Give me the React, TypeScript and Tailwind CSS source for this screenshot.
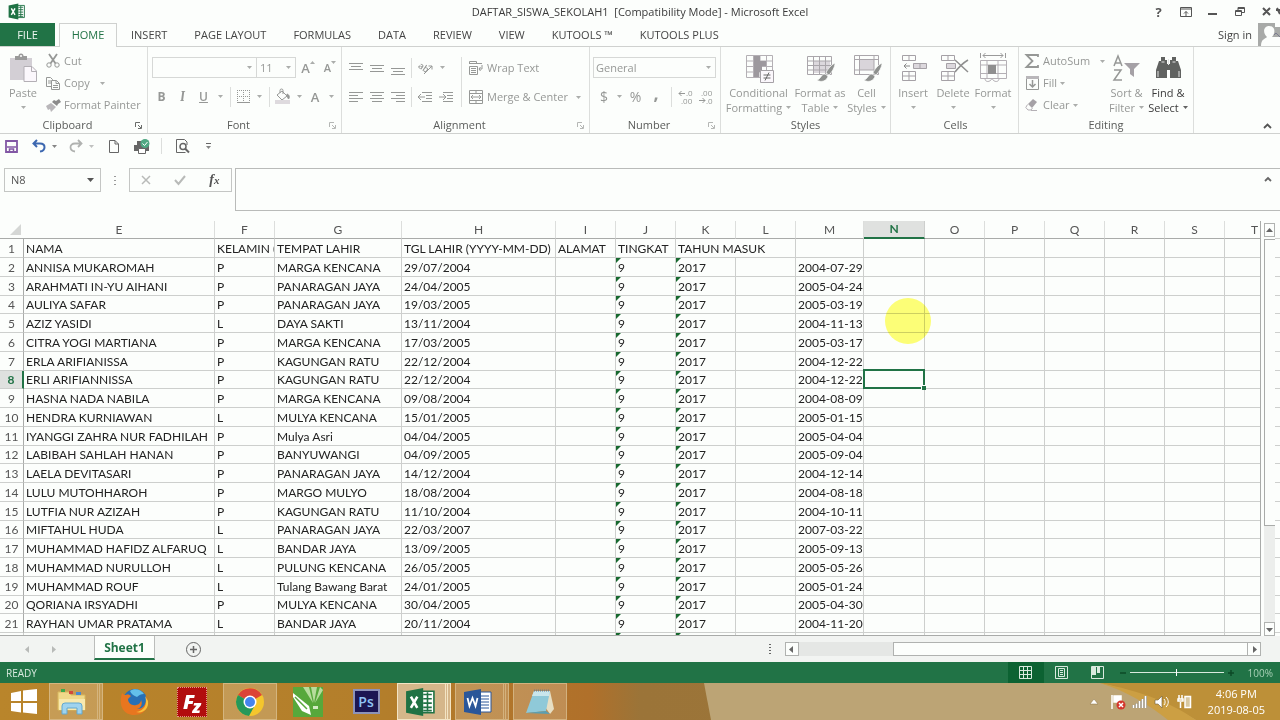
import React from "react";

type Row = [string, string, string, string, string];

const students: Row[] = [
  ["ANNISA MUKAROMAH", "P", "MARGA KENCANA", "29/07/2004", "2004-07-29"],
  ["ARAHMATI IN-YU AIHANI", "P", "PANARAGAN JAYA", "24/04/2005", "2005-04-24"],
  ["AULIYA SAFAR", "P", "PANARAGAN JAYA", "19/03/2005", "2005-03-19"],
  ["AZIZ YASIDI", "L", "DAYA SAKTI", "13/11/2004", "2004-11-13"],
  ["CITRA YOGI MARTIANA", "P", "MARGA KENCANA", "17/03/2005", "2005-03-17"],
  ["ERLA ARIFIANISSA", "P", "KAGUNGAN RATU", "22/12/2004", "2004-12-22"],
  ["ERLI ARIFIANNISSA", "P", "KAGUNGAN RATU", "22/12/2004", "2004-12-22"],
  ["HASNA NADA NABILA", "P", "MARGA KENCANA", "09/08/2004", "2004-08-09"],
  ["HENDRA KURNIAWAN", "L", "MULYA KENCANA", "15/01/2005", "2005-01-15"],
  ["IYANGGI ZAHRA NUR FADHILAH", "P", "Mulya Asri", "04/04/2005", "2005-04-04"],
  ["LABIBAH SAHLAH HANAN", "P", "BANYUWANGI", "04/09/2005", "2005-09-04"],
  ["LAELA DEVITASARI", "P", "PANARAGAN JAYA", "14/12/2004", "2004-12-14"],
  ["LULU MUTOHHAROH", "P", "MARGO MULYO", "18/08/2004", "2004-08-18"],
  ["LUTFIA NUR AZIZAH", "P", "KAGUNGAN RATU", "11/10/2004", "2004-10-11"],
  ["MIFTAHUL HUDA", "L", "PANARAGAN JAYA", "22/03/2007", "2007-03-22"],
  ["MUHAMMAD HAFIDZ ALFARUQ", "L", "BANDAR JAYA", "13/09/2005", "2005-09-13"],
  ["MUHAMMAD NURULLOH", "L", "PULUNG KENCANA", "26/05/2005", "2005-05-26"],
  ["MUHAMMAD ROUF", "L", "Tulang Bawang Barat", "24/01/2005", "2005-01-24"],
  ["QORIANA IRSYADHI", "P", "MULYA KENCANA", "30/04/2005", "2005-04-30"],
  ["RAYHAN UMAR PRATAMA", "L", "BANDAR JAYA", "20/11/2004", "2004-11-20"],
];

const columns = ["E", "F", "G", "H", "I", "J", "K", "L", "M", "N", "O", "P", "Q", "R", "S", "T"];
const tabs = ["INSERT", "PAGE LAYOUT", "FORMULAS", "DATA", "REVIEW", "VIEW", "KUTOOLS ™", "KUTOOLS PLUS"];

type IconProps = { w: number; h: number; className?: string; children: React.ReactNode };

const Icon = ({ w, h, className = "", children }: IconProps) => (
  <svg width={w} height={h} viewBox={`0 0 ${w} ${h}`} fill="none" stroke="currentColor" className={`shrink-0 overflow-visible ${className}`} aria-hidden="true">
    {children}
  </svg>
);

const Caret = ({ className = "" }: { className?: string }) => (
  <Icon w={5} h={3} className={`opacity-80 ${className}`}>
    <path d="M0 0h5L2.500 3z" fill="currentColor" stroke="none" />
  </Icon>
);

const Launcher = () => (
  <Icon w={7} h={7}>
    <path d="M.5 5V.5H5M3 3l3 3M6.500 3v3.500H3" />
  </Icon>
);

const Divider = ({ className = "" }: { className?: string }) => <span className={`w-px shrink-0 bg-[#dcdedc] ${className}`} />;

/* ---------- ribbon ---------- */

type GroupProps = { label: string; className: string; launcher?: string; children: React.ReactNode };

const Group = ({ label, className, launcher, children }: GroupProps) => (
  <section className={`flex shrink-0 flex-col border-r border-[#dcdedc] ${className}`}>
    <div className="flex h-[71px]">{children}</div>
    <div className="flex h-4 items-center text-center text-[#5a5c5a]">
      <span className="flex-1">{label}</span>
      {launcher && (
        <button aria-label={`${label} settings`} className={`w-3 ${launcher}`}>
          <Launcher />
        </button>
      )}
    </div>
  </section>
);

type BigProps = { icon: React.ReactNode; top: string; bottom?: string; className: string };

const BigButton = ({ icon, top, bottom, className }: BigProps) => (
  <button className={`flex shrink-0 flex-col items-center pt-1.5 leading-[15px] whitespace-nowrap ${className}`}>
    <span className="mb-0.5 flex h-[30px] items-center">{icon}</span>
    <span>{top}</span>
    <span className="flex h-[15px] items-center gap-1">
      {bottom}
      <Caret />
    </span>
  </button>
);

const SmallButton = ({ icon, label, caret }: { icon: React.ReactNode; label: string; caret?: string }) => (
  <button className="flex h-[22px] items-center gap-1 whitespace-nowrap">
    <span className="flex w-3.5 justify-center">{icon}</span>
    {label}
    {caret && <Caret className={caret} />}
  </button>
);

const ToolButton = ({ label, className, children }: { label: string; className: string; children: React.ReactNode }) => (
  <button aria-label={label} className={`flex h-[21px] shrink-0 items-center justify-center ${className}`}>
    {children}
  </button>
);

const Lines = ({ d }: { d: string }) => (
  <Icon w={14} h={15}>
    <path d={d} />
  </Icon>
);

const Brush = () => <path d="M28 9c-4 2-8 7-9 10l3 2c3-3 6-8 6-12zM18 20c-4 0-4 5-8 6 4 3 10 1 11-4z" fill="#8f918f" stroke="#fcfefc" strokeWidth=".7" />;

const Clipboard = () => (
  <Group label="Clipboard" className="w-[148px]" launcher="text-[#6a6c6a]">
    <BigButton
      className="w-[46px]"
      top="Paste"
      icon={
        <Icon w={26} h={30}>
          <path d="M0 5h22v22H0z" fill="#d3cfd5" stroke="none" />
          <path d="M5 7V3h3.500a2.500 2.500 0 0 1 5 0H17v4z" fill="#9a9a9a" stroke="none" />
          <circle cx="11" cy="3" r="1" fill="#fff" stroke="none" />
          <path d="M14 13.500h8l4.500 4.500v10.500H14z" fill="#fbf7fc" stroke="#b3afb5" />
          <path d="M21.500 13.500V18.500h5" stroke="#b3afb5" />
        </Icon>
      }
    />
    <div className="flex flex-col pt-[3px]">
      <SmallButton
        label="Cut"
        icon={
          <Icon w={14} h={14}>
            <path d="M3 0l6.500 9.500M11 0L4.500 9.500" strokeWidth="1.800" />
            <circle cx="3" cy="11" r="2.200" />
            <circle cx="11" cy="11" r="2.200" />
          </Icon>
        }
      />
      <SmallButton
        label="Copy"
        caret="ml-1.5"
        icon={
          <Icon w={14} h={13}>
            <path d="M.5.500h4l2 2v7h-6zM2 4h3M2 6h3" />
            <path d="M5.500 3.500h5l3 3v6h-8z" fill="#fcfefc" />
            <path d="M10 3.500v3h3M7 8.500h5M7 10.500h5" />
          </Icon>
        }
      />
      <SmallButton
        label="Format Painter"
        icon={
          <Icon w={15} h={13}>
            <path d="M0 7l5-3 5 4-5 5-1-3-2 1z" fill="#b9b7ba" stroke="none" />
            <path d="M6 3l5 4 1-2 3-2-2-3-3 2-2-1z" fill="#8b8b8b" stroke="none" />
          </Icon>
        }
      />
    </div>
  </Group>
);

const FontGroup = () => (
  <Group label="Font" className="w-[194px]" launcher="text-[#b5b7b5]">
    <div className="flex flex-col gap-2 pt-2.5 pl-1">
      <div className="flex items-center">
        <label className="flex h-[21px] w-[105px] items-center border border-[#d6d8d6] pr-1">
          <select aria-label="Font name" className="min-w-0 flex-1 appearance-none outline-none" defaultValue="">
            <option value=""></option>
          </select>
          <Caret />
        </label>
        <label className="-ml-px flex h-[21px] w-10 items-center border border-[#d6d8d6] pr-1 pl-[3px]">
          <select aria-label="Font size" className="min-w-0 flex-1 appearance-none outline-none">
            <option>11</option>
          </select>
          <Caret />
        </label>
        <ToolButton label="Increase font size" className="w-6 text-[13px] font-semibold">
          A<Caret className="mb-2.5 rotate-180" />
        </ToolButton>
        <ToolButton label="Decrease font size" className="w-5 text-[11px] font-semibold">
          A<Caret className="mb-2.5" />
        </ToolButton>
      </div>
      <div className="-ml-px flex items-center">
        <ToolButton label="Bold" className="w-[21px] text-xs font-bold">B</ToolButton>
        <ToolButton label="Italic" className="w-[21px] font-serif text-[13px] font-bold italic">I</ToolButton>
        <ToolButton label="Underline" className="w-[21px] text-xs font-semibold underline">U</ToolButton>
        <ToolButton label="Underline style" className="w-3"><Caret /></ToolButton>
        <Divider className="mx-1 h-5" />
        <ToolButton label="Borders" className="w-4">
          <Icon w={13} h={13}>
            <path d="M.5 0v13M12.500 0v13M6.500 0v13M0 .5h13M0 6.500h13" strokeDasharray="1 1" />
            <path d="M0 12.500h13" />
          </Icon>
        </ToolButton>
        <ToolButton label="Border style" className="w-4"><Caret /></ToolButton>
        <Divider className="mr-1 ml-0.5 h-5" />
        <ToolButton label="Fill colour" className="w-[18px]">
          <Icon w={16} h={15}>
            <path d="M2 6l5-4 5 5-5 4zM5 4V1.500a1.500 1.500 0 0 1 3 0V5" />
            <path d="M12 5c3 1 2.500 4 1.500 5L12 7z" fill="currentColor" />
            <path d="M0 11h15v4H0z" fill="#dedade" stroke="none" />
          </Icon>
        </ToolButton>
        <ToolButton label="Fill colours" className="w-3.5"><Caret /></ToolButton>
        <ToolButton label="Font colour" className="w-[18px] text-[13px] font-semibold">A</ToolButton>
        <ToolButton label="Font colours" className="w-3.5"><Caret /></ToolButton>
      </div>
    </div>
  </Group>
);

const Alignment = () => (
  <Group label="Alignment" className="w-[248px]" launcher="text-[#b5b7b5]">
    <div className="flex w-[115px] flex-col gap-2 pt-2.5 pl-[3px]">
      <div className="flex items-center">
        <ToolButton label="Top align" className="w-[21px]"><Lines d="M0 3.500h14M2 6.500h10M0 9.500h14" /></ToolButton>
        <ToolButton label="Middle align" className="w-[21px]"><Lines d="M0 5.500h14M2 8.500h10M0 11.500h14" /></ToolButton>
        <ToolButton label="Bottom align" className="w-[21px]"><Lines d="M0 8.500h14M2 11.500h10M0 14.500h14" /></ToolButton>
        <Divider className="mx-0.5 ml-[3px] h-5" />
        <ToolButton label="Orientation" className="w-[22px]">
          <Icon w={15} h={14}>
            <text x="0" y="8" transform="rotate(35 3 6)" fontSize="9" fontWeight="600" fill="currentColor" stroke="none">ab</text>
            <path d="M6 13L14 5M10.500 5H14v3.500" />
          </Icon>
        </ToolButton>
        <ToolButton label="Orientation options" className="w-3"><Caret /></ToolButton>
      </div>
      <div className="flex items-center">
        <ToolButton label="Align left" className="w-[21px]"><Lines d="M0 3.500h14M0 6.500h9M0 9.500h14M0 12.500h9" /></ToolButton>
        <ToolButton label="Center" className="w-[21px]"><Lines d="M0 3.500h14M2 6.500h10M0 9.500h14M2 12.500h10" /></ToolButton>
        <ToolButton label="Align right" className="w-[21px]"><Lines d="M0 3.500h14M5 6.500h9M0 9.500h14M5 12.500h9" /></ToolButton>
        <Divider className="mx-0.5 ml-[3px] h-5" />
        <ToolButton label="Decrease indent" className="w-[22px]"><Lines d="M4 3.500h10M8 6.500h6M8 9.500h6M4 12.500h10M0 8h7M3 5L0 8l3 3" /></ToolButton>
        <ToolButton label="Increase indent" className="w-5"><Lines d="M4 3.500h10M8 6.500h6M8 9.500h6M4 12.500h10M0 8h7M4 5l3 3-3 3" /></ToolButton>
      </div>
    </div>
    <Divider className="mt-2.5 ml-1 h-[50px]" />
    <div className="flex flex-1 flex-col gap-[7px] pt-2.5 pl-[7px]">
      <SmallButton
        label="Wrap Text"
        icon={
          <Icon w={14} h={14}>
            <path d="M.5.500h7v2h-7zM0 2.500h13M.5 5.500h8v8h-8zM2 7.500h5M2 9.500h5M2 11.500h5M13 4v4h-3M11.500 6L10 8l1.500 2" />
          </Icon>
        }
      />
      <SmallButton
        label="Merge & Center"
        caret="ml-1"
        icon={
          <Icon w={14} h={14}>
            <path d="M.5.500h13v13H.5zM0 3.500h14M0 10.500h14M7 .5v3M7 10.500v3M2 7h10M4 5L2 7l2 2M10 5l2 2-2 2" />
          </Icon>
        }
      />
    </div>
  </Group>
);

const NumberGroup = () => (
  <Group label="Number" className="w-[131px]" launcher="text-[#b5b7b5]">
    <div className="flex flex-1 flex-col gap-2 px-1 pt-2.5">
      <label className="-ml-px flex h-[21px] items-center border border-[#d6d8d6] pr-1 pl-0.5">
        <select aria-label="Number format" className="min-w-0 flex-1 appearance-none outline-none">
          <option>General</option>
        </select>
        <Caret />
      </label>
      <div className="flex items-center">
        <ToolButton label="Currency" className="w-5 text-sm">$</ToolButton>
        <ToolButton label="Currency options" className="w-2.5"><Caret /></ToolButton>
        <ToolButton label="Percent" className="w-[23px] text-sm">%</ToolButton>
        <ToolButton label="Comma style" className="w-[18px] pb-2 text-lg font-bold">,</ToolButton>
        <Divider className="mr-1.5 ml-1.5 h-5" />
        <ToolButton label="Increase decimal" className="w-4">
          <Icon w={14} h={14}>
            <path d="M6 3.500H0M2.500 1L0 3.500 2.500 6" />
            <text x="7" y="6" fontSize="8" fill="currentColor" stroke="none">.0</text>
            <text x="2" y="14" fontSize="8" fill="currentColor" stroke="none">.00</text>
          </Icon>
        </ToolButton>
        <ToolButton label="Decrease decimal" className="ml-1 w-4">
          <Icon w={14} h={14}>
            <path d="M0 10.500h6M3.500 8L6 10.500 3.500 13" />
            <text x="2" y="6" fontSize="8" fill="currentColor" stroke="none">.00</text>
            <text x="7" y="14" fontSize="8" fill="currentColor" stroke="none">.0</text>
          </Icon>
        </ToolButton>
      </div>
    </div>
  </Group>
);

const Styles = () => (
  <Group label="Styles" className="w-[170px]">
    <BigButton
      className="w-[75px]"
      top="Conditional"
      bottom="Formatting"
      icon={
        <Icon w={26} h={29}>
          <path d="M.5 1.500h26v22H.5zM.5 7h26M.5 12.500h26M.5 18h26M7.500 1v23M14 1v23M20.500 1v23" stroke="#b4b0b5" />
          <path d="M8 2h6v5H8zM8 7h12v5H8zM8 12h8v6H8zM8 18h5v5H8z" fill="#9d999e" stroke="none" />
          <path d="M14.500 16.500h13v12h-13z" fill="#fbf7fc" stroke="#a5a1a6" />
          <path d="M17.500 21h7M17.500 24h7M23 18.500l-4 8" stroke="#6a6a6a" />
        </Icon>
      }
    />
    <BigButton
      className="w-12"
      top="Format as"
      bottom="Table"
      icon={
        <Icon w={26} h={28}>
          <path d="M7 7h16v12H7z" fill="#dcd8dd" stroke="none" />
          <path d="M.5 2.500h24v18H.5zM.5 7h24M.5 11.500h24M.5 16h24M6.500 2v18M12.500 2v18M18.500 2v18" stroke="#aaa6ab" />
          <Brush />
        </Icon>
      }
    />
    <BigButton
      className="w-[45px]"
      top="Cell"
      bottom="Styles"
      icon={
        <Icon w={26} h={28}>
          <path d="M6 5h14v11H6z" fill="#d9d5da" stroke="none" />
          <path d="M.5 1.500h24v19H.5zM.5 5.500h24M.5 16h24M5.500 1v20M20 1v20" stroke="#aaa6ab" />
          <Brush />
        </Icon>
      }
    />
  </Group>
);

const Cells = () => (
  <Group label="Cells" className="w-[128px] pl-0.5">
    <BigButton
      className="w-10"
      top="Insert"
      icon={
        <Icon w={24} h={28}>
          <path d="M1.500 1.500h13v5h-13zM8 1.500v5M1.500 17.500h13v9h-13zM8 17.500v9M1.500 22h13" stroke="#a5a1a6" />
          <path d="M12.500 9.500h13v5h-13zM19 9.500v5" fill="#dcd8dd" stroke="#a5a1a6" />
          <path d="M9 12H3M5.500 9.500L3 12l2.500 2.500" stroke="#888" />
        </Icon>
      }
    />
    <BigButton
      className="w-10"
      top="Delete"
      icon={
        <Icon w={26} h={28}>
          <path d="M1.500 1.500h13v5h-13zM8 1.500v5M1.500 17.500h13v9h-13zM8 17.500v9M1.500 22h13" stroke="#a5a1a6" />
          <path d="M6.500 9.500h9v5h-9z" fill="#dcd8dd" stroke="#a5a1a6" />
          <path d="M15 6l13 12M28 6c-5 3-9 7-13 12" stroke="#8f8f8f" strokeWidth="1.500" />
        </Icon>
      }
    />
    <BigButton
      className="w-10"
      top="Format"
      icon={
        <Icon w={27} h={30}>
          <path d="M3 2.500h20M5.500 0L3 2.500 5.500 5M20.500 0L23 2.500 20.500 5M.5 0v5M25.500 0v5" stroke="#9a9a9a" />
          <path d="M.5 7.500h26v18H.5zM.5 12h26M.5 20.500h26M7 7v19M18 7v19" stroke="#b4b0b5" />
          <path d="M8 12h8v9H8z" fill="#8f8f8f" stroke="none" />
          <path d="M5 25.500c0 4 5 4 7 0 2 4 7 4 7 0" stroke="#b4b0b5" />
        </Icon>
      }
    />
  </Group>
);

const Editing = () => (
  <Group label="Editing" className="w-[175px]">
    <div className="flex w-[86px] flex-col pt-[3px] pl-1.5">
      <SmallButton
        label="AutoSum"
        caret="ml-1.5"
        icon={
          <Icon w={14} h={14}>
            <path d="M13 3V1H1.500l6 6-6 6H13v-2" strokeWidth="1.800" />
          </Icon>
        }
      />
      <SmallButton
        label="Fill"
        caret="-ml-px"
        icon={
          <Icon w={13} h={14}>
            <path d="M.5.500h12v13H.5z" />
            <path d="M0 0h13v3H0z" fill="#b9b7ba" stroke="none" />
            <path d="M6.500 4v7M3.500 8l3 3 3-3" strokeWidth="1.500" />
          </Icon>
        }
      />
      <SmallButton
        label="Clear"
        caret="-ml-px"
        icon={
          <Icon w={14} h={12}>
            <path d="M3 5l5-5 4 3-5 6z" fill="#a5a1a6" stroke="none" />
            <path d="M2.500 5.500L.8 8.500 3 11h3l1.500-2M6 11.500h6" stroke="#b4b0b5" />
          </Icon>
        }
      />
    </div>
    <BigButton
      className="w-[43px]"
      top="Sort &"
      bottom="Filter"
      icon={
        <Icon w={28} h={28}>
          <path d="M1 12L5 2l4 10M2.500 9h5M1 16h7L1 26h8" strokeWidth="1.500" />
          <path d="M11 9h16l-6 6v8l-4-3v-5z" fill="#a5a1a6" stroke="none" />
        </Icon>
      }
    />
    <BigButton
      className="w-10 text-[#3c3c3c]"
      top="Find &"
      bottom="Select"
      icon={
        <Icon w={25} h={24}>
          <path d="M5 1h4v3h2v18H0v-8L3 5h2zM16 1h4v4h2l3 9v8H14V4h2z" fill="#606260" stroke="none" />
          <path d="M10 8h5v6h-5z" fill="#606260" stroke="none" />
          <path d="M2 15v6M23 15v6M12.500 3v6M5.500 6h3M16.500 6h3" stroke="#e4e4e4" />
        </Icon>
      }
    />
  </Group>
);

/* ---------- window chrome ---------- */

const ExcelMark = ({ size }: { size: number }) => (
  <svg width={size} height={size} viewBox="0 0 28 28" aria-hidden="true">
    <path d="M14 4h13v20H14z" fill="#fff" stroke="#217346" strokeWidth="1.500" />
    <path d="M17 7h8M17 11h8M17 15h8M17 19h8M17 22h8M21 5v18" stroke="#217346" strokeWidth="1.500" />
    <path d="M1 4L17 1v26L1 24z" fill="#1f7244" />
    <path d="M5.500 9l6 10.500M11.500 9l-6 10.500" stroke="#fff" strokeWidth="2.400" />
  </svg>
);

const TitleBar = () => (
  <header className="grid h-[23px] shrink-0 grid-cols-[1fr_auto_1fr] items-center">
    <div className="pl-2">
      <ExcelMark size={17} />
    </div>
    <h1 className="text-[#3a3a3a]">DAFTAR_SISWA_SEKOLAH1&nbsp; [Compatibility Mode] - Microsoft Excel</h1>
    <div className="flex h-5 items-center justify-end text-[#555]">
      <button aria-label="Help" className="w-[27px] text-[13px] font-bold">?</button>
      <button aria-label="Ribbon display" className="flex w-[27px] justify-center">
        <Icon w={12} h={10}>
          <path d="M.5.500h11v9H.5zM0 2h12M6 9V4.500M4 6.500l2-2 2 2" />
        </Icon>
      </button>
      <button aria-label="Minimize" className="flex w-[27px] justify-center">
        <Icon w={9} h={6}><path d="M0 5h9" strokeWidth="2" /></Icon>
      </button>
      <button aria-label="Restore" className="flex w-[27px] justify-center">
        <Icon w={10} h={9}><path d="M.5 3.500h6v5h-6zM.5 4.500h6M3 3V.5h6.500v5H7M3 1.500h6" /></Icon>
      </button>
      <button aria-label="Close" className="flex w-[27px] justify-center">
        <Icon w={9} h={9}><path d="M1 1l7 7M8 1L1 8M14 3h4M15 1l3 6" strokeWidth="2" /></Icon>
      </button>
    </div>
  </header>
);

const TabBar = () => (
  <nav className="flex h-6 shrink-0 border-b border-[#cfd1cf] whitespace-nowrap">
    <button className="w-[55px] bg-[#217346] text-[#eef6f0]">FILE</button>
    <button className="-mb-px ml-1 w-[58px] border border-b-0 border-[#cfd1cf] bg-[#fcfefc] pb-0.5 text-[#217346]">HOME</button>
    <div className="flex gap-[27px] pl-3.5 text-[#444]">
      {tabs.map((tab) => (
        <button key={tab}>{tab}</button>
      ))}
    </div>
    <button className="mr-1.5 ml-auto text-[#444]">Sign in</button>
    <Icon w={22} h={23} className="text-[#a3a5a3]">
      <path d="M0 0h17v4h5v19H0z" fill="#a8aaa8" stroke="none" />
      <path d="M3 23c0-7 4-7 6-9-5-5-3-11 2-11 6 0 7 6 3 11h8v9z" fill="#fcfefc" stroke="none" />
      <path d="M16 12l2-2 4 4" stroke="#7c7c90" />
    </Icon>
  </nav>
);

const QuickAccess = () => (
  <div className="flex h-[34px] shrink-0 items-center pb-2.5 pl-[5px] text-[#666]">
    <button aria-label="Save">
      <Icon w={13} h={13} className="text-[#8257a5]">
        <path d="M1 1h11v11H1z" strokeWidth="1.800" />
        <path d="M2 7h9M4.500 12V9h4v3" strokeWidth="1.500" />
      </Icon>
    </button>
    <button aria-label="Undo" className="ml-3.5 flex items-center gap-1.5">
      <Icon w={14} h={12} className="text-[#3d68b0]">
        <path d="M5 0L1.500 3.500 5 7M2 3.500h6c6 0 6 7 0 8" strokeWidth="2" />
      </Icon>
      <Caret />
    </button>
    <button aria-label="Redo" className="ml-3 flex items-center gap-1.5 text-[#b0b2b0]">
      <Icon w={14} h={12}>
        <path d="M9 0l3.500 3.500L9 7M12 3.500H6c-6 0-6 7 0 8" strokeWidth="1.800" />
      </Icon>
      <Caret />
    </button>
    <button aria-label="New" className="ml-[15px]">
      <Icon w={10} h={13}><path d="M.5.500H6L9.500 4v8.500h-9zM6 .5V4h3.500" /></Icon>
    </button>
    <button aria-label="Quick print" className="ml-[15px]">
      <Icon w={16} h={15}>
        <path d="M0 6h15v6H0zM3 2h6v4H3z" fill="#666" stroke="none" />
        <path d="M4.500 9.500h7v5h-7z" fill="#fff" />
        <circle cx="11" cy="4.500" r="4.500" fill="#4fa883" stroke="none" />
        <path d="M8.500 4.500l2 2 3-3.500" stroke="#fff" />
      </Icon>
    </button>
    <Divider className="ml-[11px] h-4" />
    <button aria-label="Print preview" className="ml-3.5">
      <Icon w={14} h={14}>
        <path d="M11 6V3L8.500.500H.5v13h9" />
        <circle cx="7" cy="7.500" r="3" strokeWidth="1.500" />
        <path d="M9 9.500l4 4" strokeWidth="2" />
      </Icon>
    </button>
    <button aria-label="Customize toolbar" className="ml-4 flex flex-col items-center gap-0.5">
      <span className="h-px w-[5px] bg-[#666]" />
      <Caret />
    </button>
  </div>
);

const FormulaBar = () => (
  <div className="flex h-[43px] shrink-0 items-start">
    <label className="ml-1 flex h-6 w-[97px] items-center border border-[#c4c6c4] px-1.5 text-[#555]">
      <input aria-label="Name box" defaultValue="N8" className="min-w-0 flex-1 outline-none" />
      <Icon w={7} h={4}><path d="M0 0h7L3.500 4z" fill="currentColor" stroke="none" /></Icon>
    </label>
    <Icon w={2} h={24} className="ml-[13px] text-[#999]"><path d="M1 8v9" strokeWidth="2" strokeDasharray="1 3" /></Icon>
    <div className="ml-[13px] flex h-6 w-[103px] items-center justify-around border border-[#c4c6c4]">
      <button aria-label="Cancel">
        <Icon w={10} h={10} className="text-[#b8bab8]"><path d="M1 1l8 8M9 1L1 9" strokeWidth="1.500" /></Icon>
      </button>
      <button aria-label="Enter">
        <Icon w={12} h={10} className="text-[#b8bab8]"><path d="M1 5l3.500 4L11 1" strokeWidth="2" /></Icon>
      </button>
      <button className="font-['Liberation_Serif',serif] text-sm font-bold text-[#555] italic">
        f<span className="text-[11px]">x</span>
      </button>
    </div>
    <div className="ml-[3px] flex h-[43px] flex-1 border border-r-0 border-[#b9bbb9]">
      <input aria-label="Formula" className="min-w-0 flex-1 px-1 outline-none" />
      <button aria-label="Collapse formula bar" className="flex h-5 w-6 items-center justify-center text-[#666]">
        <Icon w={8} h={5}><path d="M1 4l3-3 3 3" strokeWidth="1.800" /></Icon>
      </button>
    </div>
  </div>
);

/* ---------- sheet ---------- */

const cell = "overflow-hidden border-r border-b border-[#cdcfcd] py-0 pl-0.5 align-bottom leading-[17px] whitespace-nowrap";

const Flag = () => <span className="absolute top-0 left-0 size-[5px] bg-[#17692f] [clip-path:polygon(0_0,100%_0,0_100%)]" />;

const RowHead = ({ n }: { n: number }) => (
  <th className={`border-r border-b border-[#cdcfcd] p-0 text-center align-bottom leading-[17px] ${n === 8 ? "border-r-2 border-r-[#217346] bg-[#dfe1df] font-bold text-[#217346]" : "border-r-[#a9aba9] font-normal text-[#555]"}`}>
    {n}
  </th>
);

const EmptyCells = ({ count }: { count: number }) => (
  <>
    {Array.from({ length: count }, (_, i) => (
      <td key={i} className={cell} />
    ))}
  </>
);

const Grid = () => (
  <table className="w-[1285px] min-w-full table-fixed border-separate border-spacing-0 font-['Lato','Open_Sans',sans-serif] text-xs text-[#222]">
    <colgroup>
      <col className="w-6" />
      <col className="w-[191px]" />
      <col className="w-[60px]" />
      <col className="w-[127px]" />
      <col className="w-[154px]" />
      <col className="w-[60px]" span={4} />
      <col className="w-[68px]" />
      <col className="w-[61px]" />
      <col className="w-[60px]" span={5} />
      <col />
    </colgroup>
    <thead>
      <tr className="h-[18px]">
        <th className="border-b border-[#a9aba9] p-0">
          <Icon w={11} h={11} className="ml-2.5"><path d="M11 0v11H0z" fill="#d5d7d5" stroke="none" /></Icon>
        </th>
        {columns.map((name) => (
          <th
            key={name}
            className={`border-r p-0 text-center align-bottom leading-4 ${name === "N" ? "border-r-[#cdcfcd] border-b-2 border-b-[#217346] bg-[#dfe1df] font-bold text-[#217346]" : "border-b border-r-[#dcdedc] border-b-[#a9aba9] font-normal text-[#555]"}`}
          >
            {name}
          </th>
        ))}
      </tr>
    </thead>
    <tbody className="[&>tr]:h-[19px] [&>tr:nth-child(4n)]:h-[18px]">
      <tr>
        <RowHead n={1} />
        <td className={cell}>NAMA</td>
        <td className={cell}>KELAMIN (</td>
        <td className={cell}>TEMPAT LAHIR</td>
        <td className={cell}>TGL LAHIR (YYYY-MM-DD)</td>
        <td className={cell}>ALAMAT</td>
        <td className={cell}>TINGKAT</td>
        <td className={cell} colSpan={2}>TAHUN MASUK</td>
        <EmptyCells count={8} />
      </tr>
      {students.map(([name, sex, town, born, iso], i) => (
        <tr key={name}>
          <RowHead n={i + 2} />
          <td className={cell}>{name}</td>
          <td className={cell}>{sex}</td>
          <td className={cell}>{town}</td>
          <td className={cell}>{born}</td>
          <td className={cell} />
          <td className={`relative ${cell}`}><Flag />9</td>
          <td className={`relative ${cell}`}><Flag />2017</td>
          <td className={cell} />
          <td className={cell}>{iso}</td>
          {i === 6 ? (
            <td className="relative border-r border-b border-[#cdcfcd] p-0">
              <span className="absolute -inset-x-px -top-0.5 -bottom-px border-2 border-[#217346]" />
              <span className="absolute -right-0.5 -bottom-0.5 size-[5px] border-t border-l border-white bg-[#217346]" />
            </td>
          ) : (
            <td className={cell} />
          )}
          <EmptyCells count={6} />
        </tr>
      ))}
      <tr>
        <td className={cell} />
        <EmptyCells count={5} />
        <td className={`relative ${cell}`}><Flag /></td>
        <td className={`relative ${cell}`}><Flag /></td>
        <EmptyCells count={9} />
      </tr>
    </tbody>
  </table>
);

const ScrollArrow = ({ label, className, d }: { label: string; className: string; d: string }) => (
  <button aria-label={label} className={`flex shrink-0 items-center justify-center border border-[#b0b2b0] bg-[#fcfefc] text-[#666] ${className}`}>
    <Icon w={7} h={7}><path d={d} fill="currentColor" stroke="none" /></Icon>
  </button>
);

const Sheet = () => (
  <main className="relative mt-2.5 flex min-h-0 flex-1">
    <div className="min-w-0 flex-1 overflow-hidden border-r border-b border-[#a9aba9]">
      <Grid />
    </div>
    <div className="ml-[3px] flex w-[11px] flex-col pt-0.5">
      <ScrollArrow label="Scroll up" className="h-3.5" d="M0 5h7L3.500 1z" />
      <div className="mt-0.5 flex flex-1 flex-col bg-[#eceeec]">
        <div className="h-3/4 border border-r-0 border-[#a9aba9] bg-[#fcfefc]" />
      </div>
      <ScrollArrow label="Scroll down" className="h-3.5" d="M0 2h7L3.500 6z" />
    </div>
    <div className="w-[5px] overflow-hidden pt-[17px]">
      {Array.from({ length: 22 }, (_, i) => (
        <div key={i} className="h-[19px] border-t border-[#cdcfcd] nth-[4n]:h-[18px]" />
      ))}
    </div>
    <div className="pointer-events-none absolute top-[77px] left-[885px] size-[46px] rounded-full bg-[#ffff78] mix-blend-multiply" />
  </main>
);

const SheetTabs = () => (
  <div className="flex h-[26px] shrink-0 items-center bg-[#f2f4f2] text-[#666]">
    <button aria-label="Previous sheet" className="ml-6 text-[#b8bab8]">
      <Icon w={6} h={7}><path d="M5 0v7L1 3.500z" fill="currentColor" stroke="none" /></Icon>
    </button>
    <button aria-label="Next sheet" className="ml-[21px] text-[#b8bab8]">
      <Icon w={6} h={7}><path d="M1 0v7l4-3.500z" fill="currentColor" stroke="none" /></Icon>
    </button>
    <button className="ml-[37px] h-6 w-[61px] self-start border-x border-b-2 border-x-[#bbbdbb] border-b-[#217346] bg-[#fcfefc] pt-0.5 text-xs font-bold text-[#217346]">Sheet1</button>
    <button aria-label="New sheet" className="ml-[31px]">
      <Icon w={15} h={15}>
        <circle cx="7.500" cy="7.500" r="7" />
        <path d="M7.500 4v7M4 7.500h7" strokeWidth="1.500" />
      </Icon>
    </button>
    <div className="mr-[19px] ml-auto flex w-[38%] items-center">
      <Icon w={2} h={10} className="mr-3.5 -ml-1.5"><path d="M1 0v10" strokeWidth="2" strokeDasharray="1 2" /></Icon>
      <ScrollArrow label="Scroll left" className="h-3.5 w-3.5" d="M5 0v7L1 3.500z" />
      <div className="flex h-3.5 flex-1 justify-end bg-[#e5e7e5]">
        <div className="w-[79%] border border-[#b0b2b0] bg-[#fcfefc]" />
      </div>
      <ScrollArrow label="Scroll right" className="-ml-px h-3.5 w-3.5" d="M2 0v7l4-3.500z" />
    </div>
  </div>
);

const StatusBar = () => (
  <footer className="flex h-[21px] shrink-0 items-center bg-[#217346] text-[#d9eadf]">
    <span className="pl-1.5 text-[10px]">READY</span>
    <button aria-label="Normal view" className="ml-auto flex h-full w-9 items-center justify-center bg-[#0c6232]">
      <Icon w={13} h={13}><path d="M.5.500h12v12H.5zM0 4.500h13M0 8.500h13M4.500 0v13M8.500 0v13" /></Icon>
    </button>
    <button aria-label="Page layout view" className="flex h-full w-9 items-center justify-center">
      <Icon w={13} h={13}><path d="M.5.500h12v12H.5zM3.500 2.500h6v8h-6zM5 4.500h3M5 6.500h3M5 8.500h3" /></Icon>
    </button>
    <button aria-label="Page break view" className="flex h-full w-9 items-center justify-center">
      <Icon w={13} h={13}>
        <path d="M.5.500h12v12H.5z" />
        <path d="M1 1h4v8H1zM6 1h3v6H6z" fill="currentColor" stroke="none" />
      </Icon>
    </button>
    <button aria-label="Zoom out" className="ml-1 w-2.5 text-[#0c4a27]">
      <Icon w={6} h={6}><path d="M0 3h6" strokeWidth="1.500" /></Icon>
    </button>
    <input
      type="range"
      aria-label="Zoom"
      defaultValue={50}
      className="h-px w-[94px] appearance-none bg-[#d9eadf] [&::-webkit-slider-thumb]:h-[7px] [&::-webkit-slider-thumb]:w-px [&::-webkit-slider-thumb]:appearance-none [&::-webkit-slider-thumb]:bg-white"
    />
    <button aria-label="Zoom in" className="ml-1 w-5 text-[#0c4a27]">
      <Icon w={6} h={6}><path d="M0 3h6M3 0v6" strokeWidth="1.500" /></Icon>
    </button>
    <span className="pr-[7px] text-[10px] text-[#a9d0b6]">100%</span>
  </footer>
);

/* ---------- taskbar ---------- */

const TaskButton = ({ label, className = "", children }: { label: string; className?: string; children: React.ReactNode }) => (
  <button aria-label={label} className={`flex h-[37px] w-[54px] shrink-0 items-center justify-center border ${className || "border-transparent"}`}>
    {children}
  </button>
);

const stacked = "relative border-[#dbc190]/70 bg-white/20 pr-2 after:absolute after:inset-y-0 after:right-0.5 after:w-[3px] after:border-x after:border-[#dbc190]/70";

const Taskbar = () => (
  <div className="relative flex h-[37px] shrink-0 items-center overflow-hidden bg-[linear-gradient(90deg,#b9852b,#b37e2b_30%,#b0702a_46%,#9b7438_50%,#9f783a)]">
    <svg className="absolute inset-0 size-full" viewBox="0 0 1280 37" preserveAspectRatio="none" aria-hidden="true">
      <path d="M704 0h576v37H711z" fill="#bca475" />
      <path d="M1100 0h180v37h-84c-30-18-60-29-96-37z" fill="#bd9038" />
      <path d="M1100 0c40 8 70 19 96 37h-28c-20-16-40-28-68-37z" fill="#cc9f43" />
    </svg>
    <div className="relative flex items-center gap-1">
      <button aria-label="Start" className="flex w-[45px] justify-end pr-2">
        <Icon w={26} h={25}>
          <path d="M0 4l10-2v10H0zM12 1.500L26 0v12H12zM0 14h10v9.500L0 22zM12 14h14v11l-14-1.500z" fill="#fff" stroke="none" />
        </Icon>
      </button>
      <TaskButton label="File Explorer" className={stacked}>
        <Icon w={30} h={27}>
          <path d="M1 4h11l2 3h14v15H1z" fill="#f0d98a" stroke="#d8b85f" />
          <path d="M4 1h4v3H4z" fill="#3da84a" stroke="none" />
          <path d="M12 3h4v3h-4z" fill="#d34a3a" stroke="none" />
          <path d="M19 4h5v3h-5z" fill="#4a8ad0" stroke="none" />
          <path d="M2 11h26v11H2z" fill="#f8e9ae" stroke="none" />
          <path d="M5 26v-8q0-3 3-3h14q3 0 3 3v8h-5v-6H10v6z" fill="#9fd3ee" stroke="#62a8cf" />
        </Icon>
      </TaskButton>
      <TaskButton label="Firefox">
        <Icon w={28} h={28}>
          <circle cx="15" cy="13" r="12" fill="#2870b5" stroke="none" />
          <path d="M10 3c4-3 11-2 14 3-3 0-5 1-7 3-3-1-6-3-7-6z" fill="#63c0ea" stroke="none" />
          <path d="M2 5c1 1 2 2 4 2 2-1 4 0 5 1l-3 3c0 4 4 7 8 6 3 0 5-3 5-5 2 4 0 8-4 9 7 0 10-6 9-14 4 9 1 20-12 20C4 27-2 18 2 5z" fill="#e8761f" stroke="none" />
          <path d="M25 8c3 9-1 15-9 16 7 2 13-3 12-11z" fill="#f9c23c" stroke="none" />
        </Icon>
      </TaskButton>
      <TaskButton label="FileZilla">
        <span className="flex size-[30px] items-center justify-center border border-dotted border-[#e29a8a] bg-[#b20d0d] text-xl font-extrabold text-white italic">
          F<span className="mt-2 -ml-0.5 text-lg leading-4">z</span>
        </span>
      </TaskButton>
      <TaskButton label="Chrome" className="border-[#dbc190]/70 bg-white/20">
        <Icon w={28} h={28}>
          <circle cx="14" cy="14" r="14" fill="#f4c62d" stroke="none" />
          <path d="M14 14L1.900 7A14 14 0 0 1 26 7z" fill="#dc4437" stroke="none" />
          <path d="M1.900 7A14 14 0 0 0 13 28l6-11-5-3z" fill="#25985a" stroke="none" />
          <circle cx="14" cy="14" r="6.500" fill="#fff" stroke="none" />
          <circle cx="14" cy="14" r="5" fill="#4584ee" stroke="none" />
        </Icon>
      </TaskButton>
      <TaskButton label="CorelDRAW">
        <Icon w={30} h={30}>
          <path d="M0 0h30v30H0z" fill="#57a83b" stroke="none" />
          <path d="M10 0l10 16L16 0zM18 0l3 16L24 0zM27 0l-5 16L30 3z" fill="#b7dc9d" stroke="none" />
          <path d="M0 6l16 13 2 9-9-4L0 10z" fill="#fff" stroke="none" />
          <path d="M2 10l12 12" stroke="#57a83b" strokeWidth="1.500" />
          <path d="M20 19h5v3h-5z" fill="#d3ebc4" stroke="none" />
        </Icon>
      </TaskButton>
      <TaskButton label="Photoshop">
        <span className="flex h-[25px] w-[27px] items-center justify-center border-2 border-[#8d93b8] bg-[#1c1652] text-sm font-semibold text-[#8fc3f5]">Ps</span>
      </TaskButton>
      <TaskButton label="Excel" className="relative border-[#f3e4c4] bg-white/45 pr-2 after:absolute after:inset-y-0 after:right-0.5 after:w-[3px] after:border-x after:border-[#f3e4c4]">
        <ExcelMark size={30} />
      </TaskButton>
      <TaskButton label="Word" className={stacked}>
        <Icon w={28} h={28}>
          <path d="M14 4h13v20H14z" fill="#fff" stroke="#2b579a" />
          <path d="M17 8h8M17 11h8M17 14h8M17 17h8M17 20h8" stroke="#2b579a" />
          <path d="M0 4l17-3v26L0 24z" fill="#2a5699" stroke="none" />
          <path d="M3.500 10l2 8 3-8 3 8 2-8" stroke="#fff" strokeWidth="1.800" />
        </Icon>
      </TaskButton>
      <TaskButton label="Notepad" className="border-[#dbc190]/70 bg-white/20">
        <Icon w={28} h={26}>
          <path d="M8 2h16l4 18-4 5z" fill="#e7dfc4" stroke="none" />
          <path d="M8 2h16l-4 20-20 2z" fill="#8fc9d8" stroke="none" />
          <path d="M8 2h16l-1 5H6z" fill="#c9e6ec" stroke="none" />
          <path d="M8 1.500h16" stroke="#71808a" strokeWidth="2" strokeDasharray="1 1" />
          <path d="M0 24l20-2 4 3z" fill="#5a9fb2" stroke="none" />
        </Icon>
      </TaskButton>
    </div>
    <div className="relative ml-auto flex items-center text-white">
      <button aria-label="Show hidden icons">
        <Icon w={8} h={5}><path d="M0 5h8L4 0z" fill="#fff" stroke="#8a7040" strokeWidth=".5" /></Icon>
      </button>
      <Icon w={16} h={16} className="ml-3">
        <path d="M2 1v14M4 2h7v6H4z" fill="#fff" stroke="#fff" strokeWidth="1.500" />
        <circle cx="11" cy="11" r="4.500" fill="#d4362c" stroke="none" />
        <path d="M9 9l4 4M13 9l-4 4" stroke="#fff" strokeWidth="1.500" />
      </Icon>
      <Icon w={15} h={12} className="ml-1.5">
        <path d="M1.500 9v3M4.500 7.500V12M7.500 5v7M10.500 3v9M13.500 0v12" stroke="#6b5a38" strokeWidth="3" />
        <path d="M1.500 9v3M4.500 7.500V12M7.500 5v7M10.500 3v9M13.500 0v12" strokeWidth="2" />
      </Icon>
      <Icon w={14} h={14} className="ml-2">
        <path d="M0 5h3l4-4v12L3 9H0z" fill="#fff" stroke="#6b5a38" strokeWidth=".6" />
        <path d="M9 4c1.500 2 1.500 4 0 6M11 2c3 3 3 7 0 10" />
      </Icon>
      <Icon w={15} h={15} className="ml-2">
        <path d="M2 1v4M5 1v4M1 5h5v2H1zM3.500 8v6" strokeWidth="1.500" />
        <path d="M8 2.500h5.500v11H8z" fill="#d8c8a0" strokeWidth="1.500" />
      </Icon>
      <time className="mr-[15px] ml-4 text-center text-[11px] leading-4 whitespace-nowrap">
        4:06 PM
        <br />
        2019-08-05
      </time>
    </div>
  </div>
);

export default function App() {
  return (
    <div className="flex h-screen min-h-[480px] flex-col overflow-hidden bg-[#fcfefc] font-['Open_Sans','Noto_Sans',sans-serif] text-[11px] leading-4 text-[#969896]">
      <TitleBar />
      <TabBar />
      <div className="flex h-[87px] shrink-0 border-b border-[#cfd1cf]">
        <Clipboard />
        <FontGroup />
        <Alignment />
        <NumberGroup />
        <Styles />
        <Cells />
        <Editing />
        <button aria-label="Collapse the ribbon" className="mt-auto mr-2 mb-1 ml-auto text-[#555]">
          <Icon w={9} h={6}><path d="M1 5l3.500-3.500L8 5" strokeWidth="1.800" /></Icon>
        </button>
      </div>
      <QuickAccess />
      <FormulaBar />
      <Sheet />
      <SheetTabs />
      <StatusBar />
      <Taskbar />
    </div>
  );
}
